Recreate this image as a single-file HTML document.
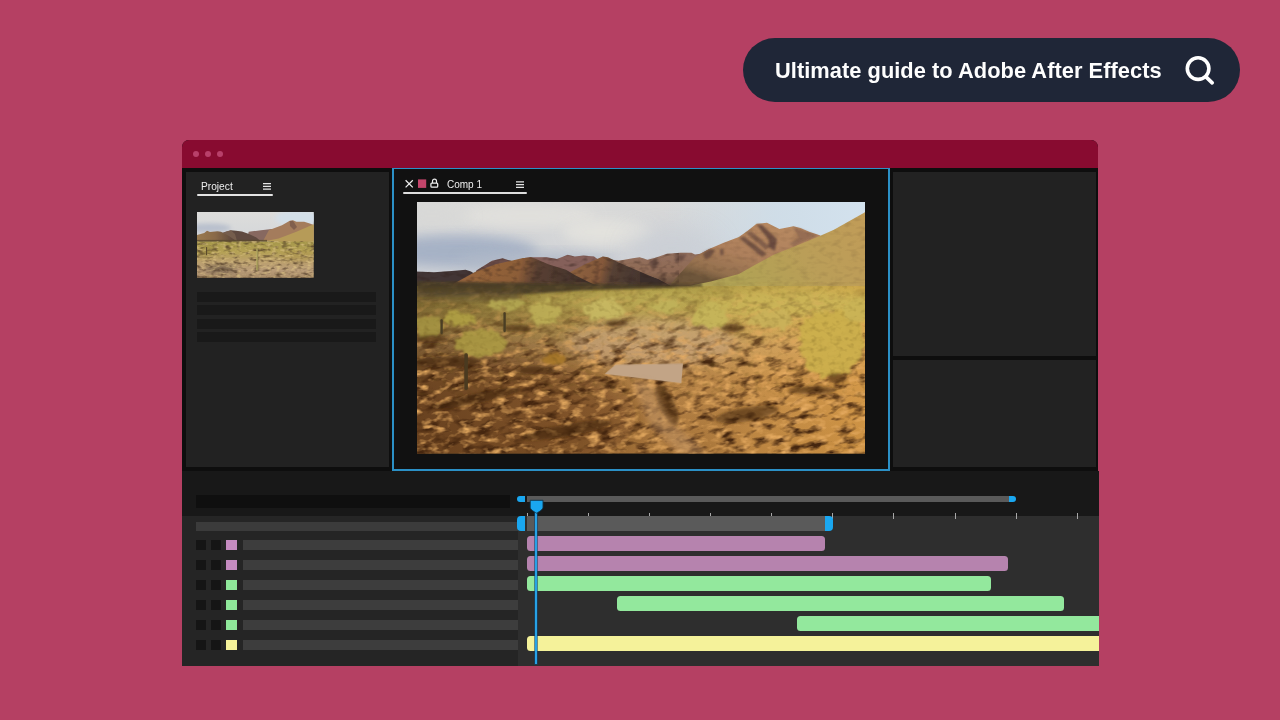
<!DOCTYPE html>
<html><head><meta charset="utf-8">
<style>
*{margin:0;padding:0;box-sizing:border-box}
html,body{width:1280px;height:720px;overflow:hidden;background:#b54063;font-family:"Liberation Sans",sans-serif;-webkit-font-smoothing:antialiased}
.t{will-change:transform;opacity:0.999}
.a{position:absolute}
#pill{left:743px;top:37.5px;width:497px;height:64.5px;border-radius:33px;background:#1f2637}
#pilltxt{left:775.3px;top:57.6px;font-size:21.82px;letter-spacing:0.045px;font-weight:bold;color:#fff;white-space:nowrap;line-height:25px}
#win{left:181.5px;top:140px;width:916.7px;height:526px;background:#0e0e0e;border-radius:7px 7px 0 0;overflow:hidden}
#tbar{left:0;top:0;width:917px;height:28px;background:#880b30}
.dot{width:6px;height:6px;border-radius:50%;background:#b8406a;top:11px}
.p{background:#222}
.row{background:#191919;left:197px;width:179px;height:10px}
.sq{width:10px;height:10px;background:#151515}
.lb{left:242.5px;width:275.5px;height:10px;background:#3d3d3d}
.bar{height:14.5px;border-radius:3.5px}
.tick{width:1px;height:6px;top:513px;background:#a8a8a8}
</style></head><body>
<svg width="0" height="0" style="position:absolute">
<defs>
<linearGradient id="sky" x1="0" y1="0" x2="0" y2="1"><stop offset="0" stop-color="#d9d9d8"/><stop offset="0.5" stop-color="#d2d4d7"/><stop offset="1" stop-color="#c9ced6"/></linearGradient>
<linearGradient id="skyR" x1="0" y1="0" x2="1" y2="0"><stop offset="0.55" stop-color="#cddeeb" stop-opacity="0"/><stop offset="0.8" stop-color="#cddeeb" stop-opacity="0.8"/><stop offset="1" stop-color="#d3e2ee" stop-opacity="1"/></linearGradient>
<linearGradient id="gnd" gradientUnits="userSpaceOnUse" x1="0" y1="84" x2="0" y2="251"><stop offset="0" stop-color="#b0a04a"/><stop offset="0.08" stop-color="#bcab52"/><stop offset="0.2" stop-color="#c1a655"/><stop offset="0.36" stop-color="#c49a5e"/><stop offset="0.55" stop-color="#bc884a"/><stop offset="1" stop-color="#ac783c"/></linearGradient>
<linearGradient id="gndL" x1="0" y1="0" x2="1" y2="0"><stop offset="0" stop-color="#3a2410" stop-opacity="0.48"/><stop offset="0.3" stop-color="#3f2812" stop-opacity="0.24"/><stop offset="0.55" stop-color="#4a3018" stop-opacity="0.04"/><stop offset="0.75" stop-color="#f0b050" stop-opacity="0.2"/><stop offset="1" stop-color="#f4b048" stop-opacity="0.42"/></linearGradient>
<linearGradient id="slope" gradientUnits="userSpaceOnUse" x1="440" y1="15" x2="330" y2="90"><stop offset="0" stop-color="#c09c58"/><stop offset="0.5" stop-color="#ba9e58"/><stop offset="1" stop-color="#b0a254"/></linearGradient>
<linearGradient id="bigm" gradientUnits="userSpaceOnUse" x1="340" y1="20" x2="320" y2="86"><stop offset="0" stop-color="#b68860"/><stop offset="0.5" stop-color="#ae805c"/><stop offset="0.85" stop-color="#94704e"/><stop offset="1" stop-color="#6e563a"/></linearGradient>
<linearGradient id="farR" gradientUnits="userSpaceOnUse" x1="250" y1="50" x2="250" y2="84"><stop offset="0" stop-color="#94705f"/><stop offset="0.6" stop-color="#8e6a54"/><stop offset="1" stop-color="#624b3a"/></linearGradient>
<linearGradient id="h1" gradientUnits="userSpaceOnUse" x1="60" y1="60" x2="170" y2="84"><stop offset="0" stop-color="#95643a"/><stop offset="0.38" stop-color="#8c5d38"/><stop offset="0.53" stop-color="#5a4032"/><stop offset="1" stop-color="#3e302a"/></linearGradient>
<linearGradient id="h2" gradientUnits="userSpaceOnUse" x1="160" y1="60" x2="245" y2="84"><stop offset="0" stop-color="#8c603e"/><stop offset="0.28" stop-color="#85593a"/><stop offset="0.42" stop-color="#554034"/><stop offset="1" stop-color="#3a2d2a"/></linearGradient>
<linearGradient id="nfade" gradientUnits="userSpaceOnUse" x1="0" y1="86" x2="0" y2="160"><stop offset="0" stop-color="#fff" stop-opacity="0.1"/><stop offset="0.35" stop-color="#fff" stop-opacity="0.4"/><stop offset="1" stop-color="#fff" stop-opacity="1"/></linearGradient>
<mask id="nm" maskUnits="userSpaceOnUse" x="0" y="80" width="448.5" height="172"><rect x="0" y="80" width="448.5" height="172" fill="url(#nfade)"/></mask>
<filter id="b6" x="-30%" y="-30%" width="160%" height="160%"><feGaussianBlur stdDeviation="6"/></filter>
<filter id="b3" x="-30%" y="-30%" width="160%" height="160%"><feGaussianBlur stdDeviation="3"/></filter>
<filter id="b2" x="-30%" y="-30%" width="160%" height="160%"><feGaussianBlur stdDeviation="1.8"/></filter>
<filter id="b1" x="-30%" y="-30%" width="160%" height="160%"><feGaussianBlur stdDeviation="0.9"/></filter>
<filter id="b05" x="-5%" y="-5%" width="110%" height="110%"><feGaussianBlur stdDeviation="0.5"/></filter>
<filter id="b12" x="-50%" y="-50%" width="200%" height="200%"><feGaussianBlur stdDeviation="12"/></filter>
<filter id="nzD" x="0" y="0" width="100%" height="100%" color-interpolation-filters="sRGB"><feTurbulence type="fractalNoise" baseFrequency="0.06 0.14" numOctaves="3" seed="7"/><feColorMatrix type="matrix" values="0 0 0 0 0.27  0 0 0 0 0.15  0 0 0 0 0.06  3.4 0 0 0 -1.62"/></filter>
<filter id="nzL" x="0" y="0" width="100%" height="100%" color-interpolation-filters="sRGB"><feTurbulence type="fractalNoise" baseFrequency="0.08 0.16" numOctaves="3" seed="23"/><feColorMatrix type="matrix" values="0 0 0 0 0.90  0 0 0 0 0.67  0 0 0 0 0.38  0 3.0 0 0 -1.48"/></filter>
<filter id="rag" x="-20%" y="-20%" width="140%" height="140%" color-interpolation-filters="sRGB"><feTurbulence type="fractalNoise" baseFrequency="0.11 0.13" numOctaves="2" seed="3" result="t"/><feDisplacementMap in="SourceGraphic" in2="t" scale="14" xChannelSelector="R" yChannelSelector="G" result="d"/><feGaussianBlur in="d" stdDeviation="0.9"/></filter>
<filter id="nzB" x="0" y="0" width="100%" height="100%" color-interpolation-filters="sRGB"><feTurbulence type="fractalNoise" baseFrequency="0.16 0.2" numOctaves="2" seed="31"/><feColorMatrix type="matrix" values="0 0 0 0 0.36  0 0 0 0 0.28  0 0 0 0 0.08  0 0 3.2 0 -1.6"/></filter>
<filter id="nzM" x="0" y="0" width="100%" height="100%" color-interpolation-filters="sRGB"><feTurbulence type="fractalNoise" baseFrequency="0.12 0.2" numOctaves="2" seed="11"/><feColorMatrix type="matrix" values="0 0 0 0 0.2  0 0 0 0 0.13  0 0 0 0 0.11  2.4 0 0 0 -1.15"/></filter>
<clipPath id="cg"><rect x="0" y="78" width="448.5" height="174"/></clipPath>
<clipPath id="cm"><path d="M0 69 L17 70 L35 69 L48.7 67.6 L54 69 L59.3 68.5 L75 58.8 L85.6 56.2 L91 58 L94.4 58.8 L105 56.2 L113.8 55.3 L129.6 55.3 L140 57 L150.7 52.6 L157.7 54.4 L166.5 53.5 L177 54.4 L180 56.5 L185.8 54.4 L191 55.3 L201.6 59 L215.7 56.2 L222.7 55.3 L230.5 57.7 L237.6 56 L249.9 51.6 L263.9 50.7 L274.5 50.7 L278 52.4 L283.3 51.6 L293.8 46.3 L306.1 41 L321.9 34.9 L330.7 28.7 L339.5 21.7 L350 20.8 L362.4 27 L376.4 24.3 L383.5 26 L392.2 29.6 L402.8 33.5 L416.9 27.8 L448.5 9.5 L448.5 92 L0 92Z"/></clipPath>
<symbol id="desert" viewBox="0 0 448.5 251.2" preserveAspectRatio="none">
 <rect width="448.5" height="100" fill="url(#sky)"/>
 <rect width="448.5" height="100" fill="url(#skyR)"/>
 <!-- clouds -->
 <ellipse cx="40" cy="49" rx="80" ry="16" fill="#a4b0c5" opacity="0.95" filter="url(#b6)"/>
 <ellipse cx="120" cy="59" rx="80" ry="10" fill="#b0b9c8" opacity="0.8" filter="url(#b6)"/>
 <ellipse cx="110" cy="14" rx="70" ry="11" fill="#e2e1dd" opacity="0.9" filter="url(#b6)"/>
 <ellipse cx="190" cy="30" rx="45" ry="13" fill="#e4e3de" opacity="0.9" filter="url(#b6)"/>
 <ellipse cx="255" cy="46" rx="45" ry="20" fill="#c9ced5" opacity="0.8" filter="url(#b12)"/>
 <ellipse cx="15" cy="14" rx="40" ry="10" fill="#d9d9d7" opacity="0.8" filter="url(#b6)"/>
 <g filter="url(#b05)">
 <!-- far ranges -->
 <path d="M59.3 68.5 L75 58.8 L85.6 56.2 L91 58 L94.4 58.8 L100 80 L55 80Z" fill="#6c4e48"/>
 <path d="M105 56.2 L113.8 55.3 L129.6 55.3 L140 57 L150.7 52.6 L157.7 54.4 L166.5 53.5 L177 54.4 L180.5 57 L185 75 L110 75Z" fill="#85605a"/>
 <path d="M196 58 L201.6 58.8 L215.7 56.2 L222.7 55.3 L230.5 57.7 L237.6 56 L249.9 51.6 L263.9 50.7 L274.5 50.7 L278 52.4 L283.3 51.6 L293.8 46.3 L300 86 L196 86Z" fill="url(#farR)"/>
 <path d="M232 58 L240 56.5 L243 62 L236 68Z M258 53 L270 52 L266 58 L258 60Z" fill="#5a423c" opacity="0.55" filter="url(#b1)"/>
 <!-- big mountain -->
 <path d="M278 55 L283.3 51.6 L293.8 46.3 L306.1 41 L321.9 34.9 L330.7 28.7 L339.5 21.7 L350 20.8 L362.4 27 L376.4 24.3 L383.5 26 L392.2 29.6 L402.8 33.1 L406 36 L380 60 L330 86 L250 86Z" fill="url(#bigm)"/>
 <g filter="url(#b1)" fill="#5a4038">
  <path d="M339.5 22.5 L345 23 L360 37 L358 49 L351 45 L352 38 Z" opacity="0.8"/>
  <path d="M322 36 L327 34.5 L350 52 L345 55 Z" opacity="0.7"/>
  <path d="M329 31 L334 29 L352 44 L349 48 Z" opacity="0.55"/>
  <path d="M286 51 L292 47.5 L298 48 L294 55 L288 57Z M303 47 L306.5 46.5 L306.5 53 L303.5 53.5Z" opacity="0.7"/>
  <path d="M376 25.5 L383.5 27 L392 30.5 L401 34 L386 40 L378 44 L372 42 L382 36Z" opacity="0.35"/>
 </g>
 <!-- right slope -->
 <path d="M448.5 9.8 L446.7 11.1 L416.9 27.8 L402.8 34 L381.7 42.8 L357.1 52.4 L337.8 63 L321.9 71.8 L293.8 79.5 L262 86 L448.5 92Z" fill="url(#slope)"/>
 <!-- near hills -->
 <path d="M-1 69.3 L17 70.2 L34.7 69 L48.7 67.6 L54 69.3 L62 75 L62 92 L-1 92Z" fill="#433536"/>
 <path d="M146 73 L154.2 69.3 L168.2 62.3 L185.8 54.4 L191 55.3 L201.6 60.5 L224.5 70.2 L241 77.5 L250 82 L262 88 L146 88Z" fill="url(#h2)"/>
 <path d="M36 82 L41.7 79 L57.5 70.2 L78.6 62.3 L94.4 58.8 L105 56.2 L113.8 55.3 L119 57 L131.3 62.3 L149 67.6 L157.7 72.9 L175.3 81.6 L200 88 L36 88Z" fill="url(#h1)"/>
 <path d="M223 70 L230.5 73.5 L241 77 L250 82 L223 84Z" fill="#3a2d2b"/>
 </g>
 <g clip-path="url(#cm)"><rect x="0" y="0" width="262" height="92" filter="url(#nzM)" opacity="0.5"/><rect x="262" y="0" width="186.5" height="92" filter="url(#nzM)" opacity="0.13"/></g>
 <!-- ground -->
 <g clip-path="url(#cg)">
  <rect x="0" y="84" width="448.5" height="168" fill="url(#gnd)"/>
  <rect x="0" y="84" width="448.5" height="168" fill="url(#gndL)"/>
  <ellipse cx="235" cy="140" rx="85" ry="24" fill="#caa67e" opacity="0.6" filter="url(#b6)"/><ellipse cx="50" cy="215" rx="170" ry="62" fill="#4a240e" opacity="0.34" filter="url(#b12)"/>
  <ellipse cx="380" cy="102" rx="90" ry="14" fill="#cbb659" opacity="0.8" filter="url(#b6)"/><ellipse cx="200" cy="96" rx="90" ry="7" fill="#c2b058" opacity="0.6" filter="url(#b6)"/>
  <path d="M0 79 L120 81 L250 82.5 L285 82 L285 84 L250 86 L170 88 L110 92 L0 94Z" fill="#4a3d28" opacity="0.95" filter="url(#b1)"/>
  <rect x="-5" y="88" width="110" height="10" fill="#5e5030" opacity="0.7" filter="url(#b3)"/>
  <!-- texture -->
  <g mask="url(#nm)">
  <g transform="rotate(-14 224 168)"><rect x="-40" y="20" width="530" height="300" filter="url(#nzD)"/></g>
  <g transform="rotate(-8 224 168)"><rect x="-40" y="20" width="530" height="300" filter="url(#nzL)"/></g>
  </g>
  <!-- bushes -->
  <g filter="url(#rag)" opacity="0.92">
   <ellipse cx="187" cy="108" rx="19" ry="10" fill="#c8b962"/>
   <ellipse cx="127" cy="111" rx="16" ry="11" fill="#bdae56"/>
   <ellipse cx="293" cy="114" rx="18" ry="13" fill="#c6b65a"/>
   <ellipse cx="354" cy="117" rx="21" ry="10" fill="#cab25a"/>
   <ellipse cx="414" cy="141" rx="33" ry="34" fill="#ccb04c"/>
   <ellipse cx="440" cy="108" rx="14" ry="12" fill="#cab456"/>
   <ellipse cx="12" cy="124" rx="14" ry="11" fill="#a49342"/>
   <ellipse cx="64" cy="141" rx="26" ry="14" fill="#ac9a44"/>
   <ellipse cx="43" cy="116" rx="15" ry="8" fill="#b0a044"/>
   <ellipse cx="137" cy="157" rx="10" ry="7" fill="#a57629"/>
   <ellipse cx="250" cy="104" rx="14" ry="6" fill="#c0b25a"/>
   <ellipse cx="90" cy="103" rx="20" ry="5" fill="#b4a852"/>
  </g>
  <rect x="0" y="84" width="448.5" height="110" filter="url(#nzB)" opacity="0.2"/>
  <!-- shadows -->
  <g filter="url(#b2)" fill="#42280f" opacity="0.62">
   <ellipse cx="30" cy="160" rx="34" ry="6"/>
   <ellipse cx="15" cy="137" rx="16" ry="4"/>
   <ellipse cx="100" cy="126" rx="14" ry="3.5"/>
   <ellipse cx="118" cy="168" rx="20" ry="4"/>
   <ellipse cx="316" cy="126" rx="12" ry="4"/>
   <ellipse cx="200" cy="121" rx="12" ry="3"/>
   <ellipse cx="60" cy="196" rx="45" ry="5" transform="rotate(-12 60 196)"/>
   <ellipse cx="150" cy="228" rx="45" ry="6" transform="rotate(-10 150 228)"/>
   <ellipse cx="330" cy="212" rx="32" ry="7" transform="rotate(-10 330 212)"/>
   <ellipse cx="250" cy="203" rx="8" ry="22" transform="rotate(-25 250 203)"/>
   <ellipse cx="395" cy="188" rx="24" ry="4"/>
   <ellipse cx="420" cy="176" rx="10" ry="5"/>
  </g>
  <!-- pad and trail -->
  <path d="M198.5 162.4 L266 161.2 L264.3 181 L187.5 171.8Z" fill="#c2a486" filter="url(#b05)"/>
  <path d="M215 178 L235 181 L250 215 L290 251 L262 251 L232 222Z" fill="#c09468" opacity="0.5" filter="url(#b3)"/>
  <!-- cacti -->
  <rect x="47.3" y="151" width="3.6" height="37" rx="1.8" fill="#4a3a20"/>
  <rect x="86.4" y="110" width="2.4" height="20" rx="1.2" fill="#4a3e24"/>
  <rect x="23.4" y="117" width="2.4" height="15" rx="1.2" fill="#4a3e24"/>
 </g>
</symbol>
</defs>
</svg>

<!-- search pill -->
<div id="pill" class="a"></div>
<div id="pilltxt" class="a t">Ultimate guide to Adobe After Effects</div>
<svg class="a" style="left:1180px;top:50px" width="40" height="40" viewBox="0 0 40 40"><circle cx="18.1" cy="18.6" r="10.8" fill="none" stroke="#fff" stroke-width="3.6"/><path d="M26 26.8 L32.2 32.8" stroke="#fff" stroke-width="3.7" stroke-linecap="round"/></svg>

<!-- window -->
<div id="win" class="a">
 <div id="tbar" class="a"></div>
 <div class="a dot" style="left:11.5px"></div><div class="a dot" style="left:23.5px"></div><div class="a dot" style="left:35.5px"></div>
</div>

<!-- panels (page coords) -->
<div class="a p" style="left:186px;top:172px;width:203.2px;height:294.8px"></div>
<div class="a p" style="left:892.6px;top:172px;width:203px;height:184px"></div>
<div class="a p" style="left:892.6px;top:360px;width:203px;height:106.8px"></div>
<!-- comp panel -->
<div class="a" style="left:392px;top:168.3px;width:498.2px;height:302.8px;background:#111;border:solid #2b90c6;border-width:1.5px 2px 2px 2.1px"></div>

<!-- project panel content -->
<div class="a t" style="left:201px;top:181px;font-size:10.2px;color:#eee;line-height:12px">Project</div>
<div class="a" style="left:196.5px;top:194px;width:76.5px;height:2px;background:#e4e4e4;border-radius:1px"></div>
<svg class="a" style="left:262px;top:182px" width="10" height="9"><path d="M1 1.6h8M1 4.4h8M1 7.2h8" stroke="#e4e4e4" stroke-width="1.2"/></svg>
<div class="a row" style="top:292px"></div><div class="a row" style="top:305.4px"></div><div class="a row" style="top:318.7px"></div><div class="a row" style="top:332px"></div>

<!-- comp tab -->
<svg class="a" style="left:404px;top:177px" width="36" height="13"><path d="M1.6 3.2l7.2 7.2M8.8 3.2l-7.2 7.2" stroke="#eee" stroke-width="1.25"/><rect x="14" y="2.4" width="8.2" height="8.5" fill="#c4456b"/><rect x="26.9" y="6.1" width="6.8" height="4.1" rx="0.9" fill="none" stroke="#eee" stroke-width="1.25"/><path d="M28.5 6V4.2a2 2 0 0 1 4 0V6" fill="none" stroke="#eee" stroke-width="1.2"/></svg>
<div class="a t" style="left:447px;top:179px;font-size:10px;color:#eee;line-height:12px">Comp 1</div>
<svg class="a" style="left:514.5px;top:180px" width="10" height="9"><path d="M1 1.8h8M1 4.6h8M1 7.4h8" stroke="#e4e4e4" stroke-width="1.2"/></svg>
<div class="a" style="left:402.5px;top:192.3px;width:124px;height:1.7px;background:#dedede;border-radius:1px"></div>

<!-- photo placeholder -->
<svg id="photo" class="a" style="left:416.5px;top:202.2px" width="448.5" height="251.5"><use href="#desert" width="448.5" height="251.5"/></svg>
<svg id="thumb" class="a" style="left:197.2px;top:211.9px" width="116.7" height="65.8" viewBox="0 0 116.7 65.6" preserveAspectRatio="none">
<defs>
<linearGradient id="tsky" x1="0" y1="0" x2="0" y2="1"><stop offset="0" stop-color="#dddddb"/><stop offset="1" stop-color="#d2d5d9"/></linearGradient>
<linearGradient id="tg" gradientUnits="userSpaceOnUse" x1="0" y1="28" x2="0" y2="65.6"><stop offset="0" stop-color="#a3964a"/><stop offset="0.3" stop-color="#b4a154"/><stop offset="0.55" stop-color="#bba06c"/><stop offset="0.8" stop-color="#b99c78"/><stop offset="1" stop-color="#a88c68"/></linearGradient>
<linearGradient id="th1" x1="0" y1="0" x2="1" y2="0"><stop offset="0" stop-color="#9a7a50"/><stop offset="0.45" stop-color="#8a6a48"/><stop offset="1" stop-color="#54403a"/></linearGradient>
<filter id="tb" x="-30%" y="-30%" width="160%" height="160%"><feGaussianBlur stdDeviation="2.2"/></filter>
<filter id="tb1" x="-30%" y="-30%" width="160%" height="160%"><feGaussianBlur stdDeviation="0.5"/></filter>
<filter id="tnD" x="0" y="0" width="100%" height="100%" color-interpolation-filters="sRGB"><feTurbulence type="fractalNoise" baseFrequency="0.14 0.3" numOctaves="2" seed="5"/><feColorMatrix type="matrix" values="0 0 0 0 0.32  0 0 0 0 0.24  0 0 0 0 0.16  3.0 0 0 0 -1.45"/></filter>
<filter id="tnL" x="0" y="0" width="100%" height="100%" color-interpolation-filters="sRGB"><feTurbulence type="fractalNoise" baseFrequency="0.2 0.35" numOctaves="2" seed="9"/><feColorMatrix type="matrix" values="0 0 0 0 0.86  0 0 0 0 0.76  0 0 0 0 0.52  0 2.6 0 0 -1.3"/></filter>
</defs>
<rect width="116.7" height="32" fill="url(#tsky)"/>
<ellipse cx="12" cy="16" rx="22" ry="4.5" fill="#b4bccb" opacity="0.85" filter="url(#tb)"/>
<ellipse cx="100" cy="6" rx="22" ry="8" fill="#d2e0ec" opacity="0.8" filter="url(#tb)"/>
<g filter="url(#tb1)">
<path d="M51.7 19.8 L63.9 18.1 L75 17 L80 29 L50 29Z" fill="#876860"/>
<path d="M72 18 L75 17 L85 13.1 L92.8 8.7 L96 8.2 L99.4 9.8 L107.2 9.8 L112.8 11.4 L116.7 13 L116.7 29 L66 29Z" fill="#a47c5c"/>
<path d="M92.8 9 L96 8.6 L100 15 L97 18 L93 14Z" fill="#6a4c42" opacity="0.6"/>
<path d="M116.7 12.3 L99.4 19.8 L81.7 26.4 L66 29.5 L116.7 31Z" fill="#b69b58"/>
<path d="M22 22 L29.4 19.4 L33.9 18.1 L39 18.8 L45 19.4 L52 22 L59.4 25.3 L64 29.5 L22 29.5Z" fill="#5e4a40"/><path d="M26 21 L29.4 19.4 L33.9 18.1 L38 22 L40 29 L30 29Z" fill="#7a6250" opacity="0.8"/><path d="M0 23 L7.2 20.9 L10 18.8 L13 20 L20.5 19.2 L24 19.6 L32 24 L40 29.5 L0 29.5Z" fill="url(#th1)"/>
<rect x="0" y="27.8" width="70" height="2.4" fill="#5a4a30" opacity="0.8"/>
<rect x="0" y="29.5" width="116.7" height="36.1" fill="url(#tg)"/>
</g>
<ellipse cx="24" cy="57" rx="16" ry="4" fill="#4a3a30" opacity="0.55" filter="url(#tb)"/>
<ellipse cx="8" cy="40" rx="8" ry="5" fill="#8a7a38" opacity="0.6" filter="url(#tb)"/>
<ellipse cx="100" cy="44" rx="16" ry="5" fill="#a89048" opacity="0.5" filter="url(#tb)"/>
<rect x="0" y="29.5" width="116.7" height="36.1" filter="url(#tnD)" opacity="0.8"/>
<rect x="0" y="29.5" width="116.7" height="36.1" filter="url(#tnL)" opacity="0.8"/>
<rect x="59.3" y="36.5" width="1.7" height="22" rx="0.8" fill="#b5ab62"/>
<rect x="60.6" y="36.5" width="0.7" height="22" fill="#6a5a38" opacity="0.7"/>
<rect x="9" y="35" width="1.1" height="8" fill="#5a4a2c"/>
</svg>

<!-- lower strip -->
<div class="a" style="left:181.5px;top:470.8px;width:917px;height:45.5px;background:#181818"></div>
<div class="a" style="left:196px;top:494.5px;width:314px;height:13.5px;background:#0f0f0f"></div>
<!-- timeline -->
<div class="a" style="left:181.5px;top:516px;width:336.5px;height:150px;background:#252525"></div>
<div class="a" style="left:518px;top:516px;width:580.5px;height:150px;background:#2e2e2e"></div>
<div class="a" style="left:196px;top:521.8px;width:322px;height:9.6px;background:#3b3b3b"></div>

<!-- rows -->
<div class="a sq" style="left:196px;top:540.3px"></div><div class="a sq" style="left:211px;top:540.3px"></div><div class="a sq" style="left:226.3px;top:540.3px;background:#c58bc0;width:10.5px"></div><div class="a lb" style="top:540.3px"></div><div class="a sq" style="left:196px;top:560.3px"></div><div class="a sq" style="left:211px;top:560.3px"></div><div class="a sq" style="left:226.3px;top:560.3px;background:#c58bc0;width:10.5px"></div><div class="a lb" style="top:560.3px"></div><div class="a sq" style="left:196px;top:580.3px"></div><div class="a sq" style="left:211px;top:580.3px"></div><div class="a sq" style="left:226.3px;top:580.3px;background:#8fe89a;width:10.5px"></div><div class="a lb" style="top:580.3px"></div><div class="a sq" style="left:196px;top:600.3px"></div><div class="a sq" style="left:211px;top:600.3px"></div><div class="a sq" style="left:226.3px;top:600.3px;background:#8fe89a;width:10.5px"></div><div class="a lb" style="top:600.3px"></div><div class="a sq" style="left:196px;top:620.3px"></div><div class="a sq" style="left:211px;top:620.3px"></div><div class="a sq" style="left:226.3px;top:620.3px;background:#8fe89a;width:10.5px"></div><div class="a lb" style="top:620.3px"></div><div class="a sq" style="left:196px;top:640.3px"></div><div class="a sq" style="left:211px;top:640.3px"></div><div class="a sq" style="left:226.3px;top:640.3px;background:#f5f29a;width:10.5px"></div><div class="a lb" style="top:640.3px"></div>
<!-- ticks -->
<div class="a tick" style="left:526.7px"></div><div class="a tick" style="left:587.8px"></div><div class="a tick" style="left:648.9px"></div><div class="a tick" style="left:710.1px"></div><div class="a tick" style="left:771.2px"></div><div class="a tick" style="left:832.3px"></div><div class="a tick" style="left:893.4px"></div><div class="a tick" style="left:954.5px"></div><div class="a tick" style="left:1015.7px"></div><div class="a tick" style="left:1076.8px"></div>
<!-- nav bar + work area -->
<div class="a" style="left:527px;top:496.3px;width:481.5px;height:6px;background:#5a5a5a"></div>
<div class="a" style="left:517.4px;top:496px;width:8.1px;height:6.3px;background:#1aa7f0;border-radius:3.2px 0 0 3.2px"></div>
<div class="a" style="left:1008.5px;top:496.2px;width:7.8px;height:6.3px;background:#1aa7f0;border-radius:0 3.2px 3.2px 0"></div>
<div class="a" style="left:527px;top:516px;width:298.5px;height:15px;background:#5a5a5a"></div>
<div class="a" style="left:517.3px;top:516px;width:8.2px;height:14.9px;background:#1aa7f0;border-radius:4px 0 0 4px"></div>
<div class="a" style="left:825.3px;top:516.3px;width:7.7px;height:14.4px;background:#1aa7f0;border-radius:0 4px 4px 0"></div>
<!-- clip so bars don't overflow window -->
<div class="a" style="left:518px;top:532px;width:580.5px;height:134px;overflow:hidden"><div class="a" style="left:-518px;top:-532px;width:1280px;height:720px">
<div class="a bar" style="left:527px;top:536px;width:297.79999999999995px;background:#b683ae"></div><div class="a bar" style="left:527px;top:556px;width:480.5px;background:#b683ae"></div><div class="a bar" style="left:527px;top:576px;width:463.79999999999995px;background:#93e89d"></div><div class="a bar" style="left:616.5px;top:596px;width:447.29999999999995px;background:#93e89d"></div><div class="a bar" style="left:797.4px;top:616px;width:312.6px;background:#93e89d"></div><div class="a bar" style="left:527px;top:636px;width:583px;background:#f5f29a"></div>
</div></div>
<!-- playhead -->
<div class="a" style="left:535.4px;top:508px;width:1.7px;height:156px;background:#27a2e6;box-shadow:0 0 0 0.7px rgba(20,70,110,0.85)"></div>
<svg class="a" style="left:528px;top:498px" width="17" height="17" viewBox="0 0 17 17"><path d="M2.2 2.3h12.8v6.9c0 2.4-3.8 4.5-6.4 6c-2.6-1.5-6.4-3.6-6.4-6z" fill="#1aa7f0" stroke="#10334a" stroke-width="0.9"/></svg>
</body></html>
